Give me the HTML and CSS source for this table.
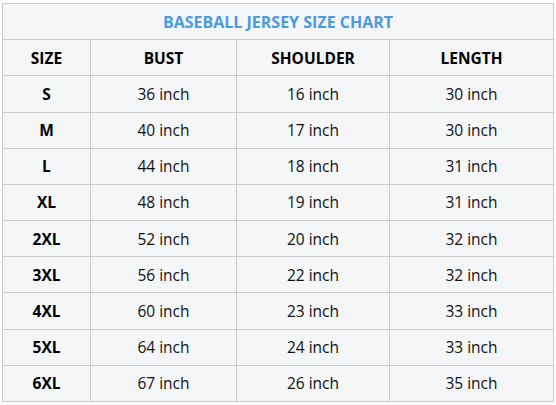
FILE: index.html
```html
<!DOCTYPE html>
<html lang="en">
<head>
<meta charset="utf-8">
<title>Baseball Jersey Size Chart</title>
<link rel="stylesheet" href="styles.css">
</head>
<body>
<table class="chart">
  <colgroup>
    <col class="c-size">
    <col class="c-bust">
    <col class="c-shoulder">
    <col class="c-length">
  </colgroup>
  <thead>
    <tr><th class="title" colspan="4">BASEBALL JERSEY SIZE CHART</th></tr>
    <tr><th>SIZE</th><th>BUST</th><th>SHOULDER</th><th>LENGTH</th></tr>
  </thead>
  <tbody>
    <tr><th>S</th><td>36 inch</td><td>16 inch</td><td>30 inch</td></tr>
    <tr><th>M</th><td>40 inch</td><td>17 inch</td><td>30 inch</td></tr>
    <tr><th>L</th><td>44 inch</td><td>18 inch</td><td>31 inch</td></tr>
    <tr><th>XL</th><td>48 inch</td><td>19 inch</td><td>31 inch</td></tr>
    <tr><th>2XL</th><td>52 inch</td><td>20 inch</td><td>32 inch</td></tr>
    <tr><th>3XL</th><td>56 inch</td><td>22 inch</td><td>32 inch</td></tr>
    <tr><th>4XL</th><td>60 inch</td><td>23 inch</td><td>33 inch</td></tr>
    <tr><th>5XL</th><td>64 inch</td><td>24 inch</td><td>33 inch</td></tr>
    <tr><th>6XL</th><td>67 inch</td><td>26 inch</td><td>35 inch</td></tr>
  </tbody>
</table>
</body>
</html>
```
FILE: styles.css
```css
html, body {
  background: #ffffff;
}
body {
  margin: 3px 0 0 2px;
  font-family: "Open Sans", "Noto Sans", sans-serif;
  color: #111111;
}
.chart {
  border-collapse: collapse;
  table-layout: fixed;
  width: 551px;
  background: #f5f6f8;
  font-size: 15.5px;
}
.c-size { width: 88px; }
.c-bust { width: 146px; }
.c-shoulder { width: 153px; }
.c-length { width: 164px; }
.chart th,
.chart td {
  border: 1px solid #cbcbcb;
  height: 35.18px;
  padding: 0;
  text-align: center;
  vertical-align: middle;
  line-height: 20px;
}
.chart th {
  font-weight: 700;
  color: #000000;
}
.chart td {
  font-weight: 400;
}
.chart .title {
  color: #4a9be0;
  font-size: 16px;
}
```
